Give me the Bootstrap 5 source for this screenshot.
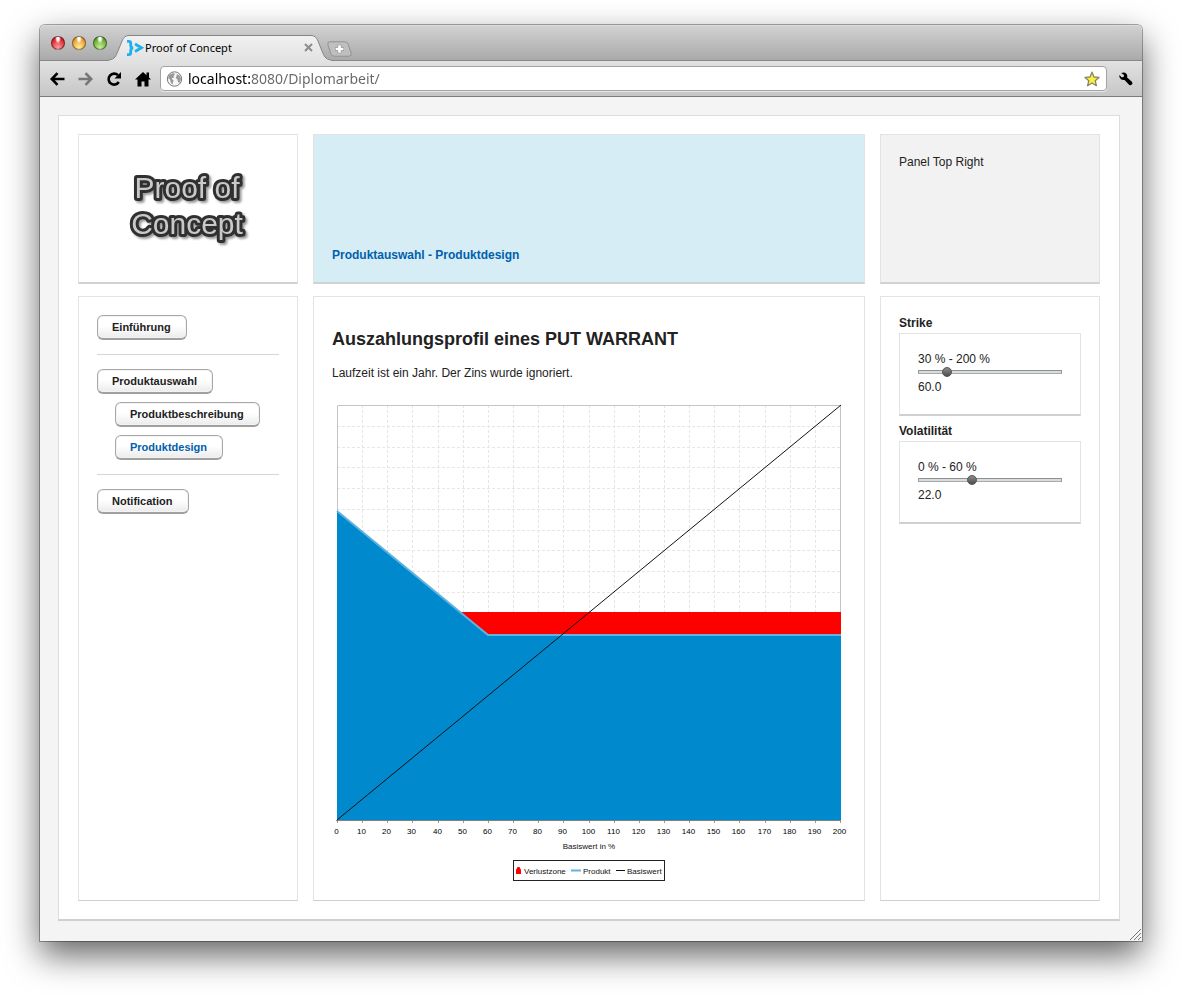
<!DOCTYPE html>
<html lang="de">
<head>
<meta charset="utf-8">
<meta name="viewport" content="width=device-width, initial-scale=1">
<title>Proof of Concept</title>
<link href="https://cdn.jsdelivr.net/npm/bootstrap@5.3.0/dist/css/bootstrap.min.css" rel="stylesheet">
<style>
  body { font: 12px/18px "Liberation Sans", Arial, sans-serif; color: #222; background: #fff; padding: 25px 40px 54px; }
  .window { border-radius: 5px 5px 0 0; background: #f4f4f4; box-shadow: 0 0 0 1px rgba(0,0,0,.32), 0 14px 34px rgba(0,0,0,.62); }
  .chrome-text { font-family: "Noto Sans", sans-serif; color: #000; }
  .titlebar { height: 36px; border-radius: 5px 5px 0 0; background: linear-gradient(#d2d2d2, #aaa); border-bottom: 1px solid #888; box-shadow: inset 0 1px #dcdcdc; padding-left: 11px; }
  .lights { gap: 7px; padding-top: 11px; }
  .lights button { width: 14px; height: 14px; border-radius: 50%; border: 1px solid rgba(0,0,0,.45); padding: 0; }
  .light-close { background: radial-gradient(ellipse at 50% 12%, #fff 0 12%, transparent 36%), radial-gradient(circle at 50% 85%, #ff9c9c, #d9202b 70%); }
  .light-min { background: radial-gradient(ellipse at 50% 12%, #fff 0 12%, transparent 36%), radial-gradient(circle at 50% 85%, #fff08a, #e8912d 75%); }
  .light-max { background: radial-gradient(ellipse at 50% 12%, #fff 0 12%, transparent 36%), radial-gradient(circle at 50% 85%, #c8f08c, #5da22c 75%); }
  .tab-item { width: 218px; height: 25px; margin-left: 2px; padding: 0 14px 0 18px; font-size: 11px; line-height: 24px; }
  .tab-shape { position: absolute; left: 0; top: 0; z-index: 0; }
  .tab-item > :not(.tab-shape) { position: relative; z-index: 1; }
  .plain { background: none; border: 0; padding: 0; line-height: 0; color: #000; }
  .toolbar { height: 36px; background: linear-gradient(#e2e2e2, #c6c6c6); border-bottom: 1px solid #7c7c7c; padding: 0 9px 0 10px; }
  .navset { gap: 13px; padding-right: 9px; }
  .omnibox { height: 25px; background: #fff; border: 1px solid #a3a3a3; border-radius: 4px; box-shadow: 0 1px #e6e6e6; padding: 0 6px 0 5px; }
  .omnibox input { border: 0; outline: 0; padding: 0; font-size: 14px; line-height: 20px; color: #666; background: linear-gradient(90deg, #000 62px, #666 62px); -webkit-background-clip: text; background-clip: text; -webkit-text-fill-color: transparent; }
  .viewport { padding: 18px 22px 20px 18px; }
  .page { background: #fff; border: 1px solid #dcdcdc; border-bottom: 2px solid #cfcfcf; padding: 18px 19px; }
  .layout { display: grid; grid-template-columns: 220px minmax(0, 1fr) 220px; gap: 12px 15px; }
  .panel { background: #fff; border: 1px solid #e3e3e3; border-bottom-color: #cfcfcf; padding: 18px; }
  .panel-head { min-height: 150px; border-bottom: 2px solid #d2d2d2; }
  .panel-info { background: #d7edf5; }
  .panel-muted { background: #f2f2f2; }
  .blue { color: #0060ad; }
  .nav-btn { height: 25px; padding: 0 15px 0 14px; border: 1px solid #a8a8a8; border-bottom: 2px solid #a0a0a0; border-radius: 6px; background: linear-gradient(#fff 45%, #ebebeb); box-shadow: inset 0 0 0 1px #f3f3f3; font: bold 11px/22px "Liberation Sans", Arial, sans-serif; color: #222; }
  .nav-btn.blue { color: #0060ad; }
  .indent { margin-left: 18px; }
  .rule { border-top: 1px solid #d6d6d6; margin: 6px 0; }
  h1 { font-size: 18px; line-height: 22px; font-weight: bold; margin: 13px 0 14px; }
  .chart { display: block; width: 100%; height: auto; margin-top: 18px; overflow: visible; font-family: "Liberation Sans", Arial, sans-serif; font-size: 8px; }
  .slider-label { display: block; font-weight: bold; line-height: 16px; margin-bottom: 2px; }
  .slider-box { border: 1px solid #e3e3e3; border-bottom: 2px solid #d0d0d0; padding: 16px 18px 18px; margin-bottom: 7px; }
  .range { -webkit-appearance: none; appearance: none; display: block; width: 100%; height: 8px; margin: 0 0 2px; background: none; }
  .range::-webkit-slider-runnable-track { height: 4px; background: linear-gradient(#8f9191 25%, #d7dcdc 25% 75%, #a9abab 75%); border: solid #999; border-width: 0 1px; }
  .range::-webkit-slider-thumb { -webkit-appearance: none; width: 10px; height: 10px; margin-top: -3px; border-radius: 50%; border: 1px solid #555; background: linear-gradient(#8a8a8a, #4e4e4e); }
  .grip { position: absolute; right: 1px; bottom: 1px; }
</style>
</head>
<body>
<div class="window position-relative">
  <header class="chrome-text">
    <div class="titlebar d-flex">
      <div class="lights d-flex">
        <button class="light-close" aria-label="Schließen"></button>
        <button class="light-min" aria-label="Minimieren"></button>
        <button class="light-max" aria-label="Maximieren"></button>
      </div>
      <div class="tab-item position-relative d-flex align-items-center align-self-end">
        <svg class="tab-shape" width="222" height="26" viewBox="0 0 222 26" aria-hidden="true">
          <defs><linearGradient id="tabfill" x1="0" y1="0" x2="0" y2="1"><stop offset="0" stop-color="#f1f1f1"/><stop offset="1" stop-color="#e2e2e2"/></linearGradient></defs>
          <path d="M0 25C6 24 7 21 9 16L13 6Q15 .5 20 .5H202Q207 .5 209 6L213 16C215 21 216 24 222 25V26H0Z" fill="url(#tabfill)"/>
          <path d="M0 25C6 24 7 21 9 16L13 6Q15 .5 20 .5H202Q207 .5 209 6L213 16C215 21 216 24 222 25" fill="none" stroke="#858585"/>
        </svg>
        <svg class="flex-shrink-0" width="18" height="18" viewBox="0 0 18 18" fill="none" stroke="#1cb1ec" aria-hidden="true"><path stroke-width="2.800" d="M0 2.400H2Q3.700 2.400 3.700 4V6.500Q3.700 8.500 6 9Q3.700 9.500 3.700 11.500V14Q3.700 15.600 2 15.600H0"/><path stroke-width="2.800" d="M8 5l6.500 3.800L8 12.500"/></svg>
        <span class="flex-grow-1 text-nowrap">Proof of Concept</span>
        <button class="plain" aria-label="Tab schließen"><svg width="9" height="9" viewBox="0 0 9 9" stroke="#8c8c8c" stroke-width="2"><path d="M1 1l7 7M8 1l-7 7"/></svg></button>
      </div>
      <button class="plain align-self-start mt-3" aria-label="Neuer Tab"><svg width="25" height="16" viewBox="0 0 26 16"><path d="M3 .5H18Q21 .5 22 3L25 12Q26 15.500 23 15.500H8Q5 15.500 4 13L1 4Q0 .5 3 .5Z" fill="#bfbfbf" stroke="#909090"/><path d="M13 3.500v9M8.500 8h9" stroke="#909090" stroke-width="4"/><path d="M13 4v8M9 8h8" stroke="#fff" stroke-width="2.800"/></svg></button>
    </div>
    <div class="toolbar d-flex align-items-center">
      <div class="navset d-flex align-items-center">
        <button class="plain" aria-label="Zurück"><svg width="15" height="14" viewBox="0 0 15 14" fill="none" stroke="#000" stroke-width="2.600"><path d="M14.500 7H2M7.500 1.200L1.800 7l5.700 5.800"/></svg></button>
        <button class="plain" aria-label="Vor"><svg width="15" height="14" viewBox="0 0 15 14" fill="none" stroke="#777" stroke-width="2.600"><path d="M.5 7H13M7.500 1.200L13.200 7l-5.700 5.800"/></svg></button>
        <button class="plain" aria-label="Neu laden"><svg width="16" height="16" viewBox="0 0 16 16"><path d="M12.800 11A5.500 5.500 0 1 1 12 4.200" fill="none" stroke="#000" stroke-width="2.600"/><path d="M15 1v6.500H8.500Z"/></svg></button>
        <button class="plain" aria-label="Startseite"><svg width="16" height="16" viewBox="0 0 16 16"><path d="M8 1L0 8.500h2.500V15.500H6.500V10.500h3v5h4V8.500H16L14 6.600V1.500H11.500V4.200Z"/></svg></button>
      </div>
      <div class="omnibox d-flex align-items-center flex-grow-1">
        <svg class="flex-shrink-0 me-1" width="18" height="16" viewBox="0 0 18 16" aria-hidden="true"><circle cx="8.500" cy="8" r="7.200" fill="#f4f4f4" stroke="#777"/><path d="M3 4L7 2L9 3L7.500 5L8 6.500L5.500 7.500L7.500 9.500L6.500 13.500L5 12L4 8.500L2 7ZM11 3L14 5L15 8L13.500 12L12 11L11.500 8.500L9.800 7L10.500 5Z" fill="#999"/></svg>
        <input class="flex-grow-1 chrome-text" type="text" aria-label="Adresse" value="localhost:8080/Diplomarbeit/">
        <button class="plain" aria-label="Lesezeichen"><svg width="16" height="16" viewBox="0 0 16 16"><path d="M8 1.200L10 6l5 .4-3.800 3.300 1.200 5L8 12l-4.400 2.700 1.200-5L1 6.400 6 6Z" fill="#fdf038" stroke="#85856f" stroke-width="1.300" stroke-linejoin="round"/></svg></button>
      </div>
      <button class="plain ps-2 ms-1 pe-0" aria-label="Einstellungen"><svg width="14" height="16" viewBox="0 0 16 16"><path d="M2.500 1.200Q6-.6 8.700 2.200Q10 4 9.300 6.200L15 11.500Q16 13.500 14.500 14.700Q12.800 15.800 11.500 14.500L6.300 9Q3 10 1.200 7.200Q0 5.500.4 3.500L3.300 6.200L5.500 5.500L5.700 3.500Z"/></svg></button>
    </div>
  </header>

  <main class="viewport">
    <div class="page">
      <div class="layout">
        <section class="panel panel-head d-flex justify-content-center">
          <svg width="130" height="96" viewBox="0 0 130 96" role="img" aria-label="Proof of Concept">
            <g font-family="Liberation Sans, Arial, sans-serif" font-size="30" text-anchor="middle" fill="#c9c9c9" stroke="#303030" stroke-width="6" stroke-linejoin="round" paint-order="stroke" style="filter:drop-shadow(2px 2px 1px rgba(0,0,0,.4))">
              <text x="64" y="45">Proof of</text><text x="64" y="81">Concept</text>
            </g>
          </svg>
        </section>
        <section class="panel panel-head panel-info d-flex align-items-end"><strong class="blue">Produktauswahl - Produktdesign</strong></section>
        <section class="panel panel-head panel-muted">Panel Top Right</section>

        <nav class="panel d-flex flex-column align-items-start gap-2">
          <button class="nav-btn">Einführung</button>
          <div class="rule w-100"></div>
          <button class="nav-btn">Produktauswahl</button>
          <button class="nav-btn indent">Produktbeschreibung</button>
          <button class="nav-btn indent blue">Produktdesign</button>
          <div class="rule w-100"></div>
          <button class="nav-btn">Notification</button>
        </nav>

        <section class="panel pb-0">
          <h1>Auszahlungsprofil eines PUT WARRANT</h1>
          <p class="mb-0">Laufzeit ist ein Jahr. Der Zins wurde ignoriert.</p>
          <svg class="chart" id="chart" viewBox="332 400 514 500" role="img" aria-label="Auszahlungsprofil">
            <g id="grid" stroke="#e6e6e6" stroke-dasharray="3 2" shape-rendering="crispEdges"></g>
            <path d="M337.500 820V405.500H840.500V820" fill="none" stroke="#c4c4c4"/>
            <path d="M460 612H841V636H488Z" fill="#f00"/>
            <path d="M337 820V511L488 635H841V820Z" fill="#008acd"/>
            <path d="M337 511L488 635H841" fill="none" stroke="#60b3e0" stroke-width="2"/>
            <path d="M337 820L841 405" stroke="#111" fill="none"/>
            <path d="M336 820.500H841" stroke="#808080" stroke-width="1"/>
            <g id="ticks" stroke="#999" shape-rendering="crispEdges"></g>
            <g id="labels" text-anchor="middle" fill="#000"></g>
            <g fill="#111">
              <text x="589" y="849" text-anchor="middle">Basiswert in %</text>
              <rect x="513.500" y="860.500" width="151" height="20" fill="#fff" stroke="#222"/>
              <path d="M516 874V870L517.500 867H519.500L521 870V874Z" fill="#f00"/>
              <text x="524" y="874">Verlustzone</text>
              <path d="M571 870.500H581" stroke="#60b3e0" stroke-width="2"/>
              <text x="583" y="874">Produkt</text>
              <path d="M616 870.500H625" stroke="#111"/>
              <text x="627" y="874">Basiswert</text>
            </g>
          </svg>
        </section>

        <aside class="panel">
          <label class="slider-label" for="strike">Strike</label>
          <div class="slider-box">
            <div>30 % - 200 %</div>
            <input class="range" id="strike" type="range" min="30" max="200" value="60">
            <output class="d-block" for="strike">60.0</output>
          </div>
          <label class="slider-label" for="vola">Volatilität</label>
          <div class="slider-box">
            <div>0 % - 60 %</div>
            <input class="range" id="vola" type="range" min="0" max="60" value="22">
            <output class="d-block" for="vola">22.0</output>
          </div>
        </aside>
      </div>
    </div>
  </main>
  <svg class="grip" width="11" height="11" viewBox="0 0 11 11" stroke="#777" stroke-width="1" aria-hidden="true"><path d="M0 11L11 0M4 11L11 4M8 11L11 8"/></svg>
</div>
<script src="https://cdn.jsdelivr.net/npm/bootstrap@5.3.0/dist/js/bootstrap.bundle.min.js"></script>
<script>
  // Grid lines, tick marks and axis labels: 20 divisions each way.
  const NS = 'http://www.w3.org/2000/svg';
  const add = (parent, tag, attrs, text) => {
    const el = document.createElementNS(NS, tag);
    for (const k in attrs) el.setAttribute(k, attrs[k]);
    if (text !== undefined) el.textContent = text;
    document.getElementById(parent).appendChild(el);
  };
  for (let i = 0; i <= 20; i++) {
    const x = 337 + Math.round(i * 503 / 20) + 0.5;
    const y = 405 + Math.round(i * 415 / 20) + 0.5;
    if (i > 0 && i < 20) {
      add('grid', 'path', { d: `M${x} 405V820` });
      add('grid', 'path', { d: `M337 ${y}H841` });
    }
    add('ticks', 'path', { d: `M${x} 821V823` });
    add('labels', 'text', { x: x - 1, y: 834 }, i * 10);
  }
  // Show each slider's value below it.
  document.querySelectorAll('.range').forEach(r =>
    r.addEventListener('input', () => { r.nextElementSibling.value = Number(r.value).toFixed(1); }));
</script>
</body>
</html>
